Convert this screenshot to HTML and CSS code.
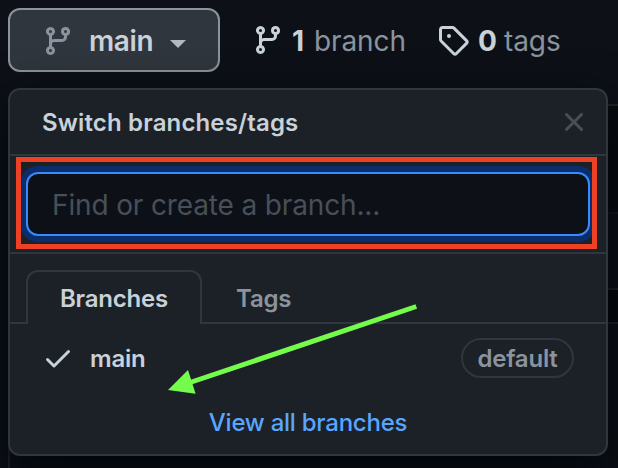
FILE: index.html
```html
<!DOCTYPE html>
<html lang="en">
<head>
<meta charset="utf-8">
<title>Switch branches/tags</title>
<link rel="stylesheet" href="styles.css">
</head>
<body>
<svg class="defs" width="0" height="0">
  <symbol id="git-branch" viewBox="0 0 16 16"><path fill-rule="evenodd" d="M11.75 2.5a.75.75 0 100 1.5.75.75 0 000-1.5zm-2.25.75a2.25 2.25 0 113 2.122V6A2.5 2.5 0 0110 8.5H6a1 1 0 00-1 1v1.128a2.251 2.251 0 11-1.5 0V5.372a2.25 2.25 0 111.5 0v1.836A2.492 2.492 0 016 7h4a1 1 0 001-1v-.628A2.25 2.25 0 019.5 3.25zM4.25 12a.75.75 0 100 1.5.75.75 0 000-1.5zM3.5 3.25a.75.75 0 111.5 0 .75.75 0 01-1.5 0z"/></symbol>
</svg>
<div class="page">
  <header class="toolbar">
    <button class="branch-button" type="button">
      <svg class="icon"><use href="#git-branch"/></svg>
      <span class="branch-name">main</span>
      <span class="caret"></span>
    </button>
    <a class="stat stat-branch"><svg class="icon"><use href="#git-branch"/></svg><strong>1</strong><span class="stat-label">branch</span></a>
    <a class="stat stat-tag"><svg class="icon" viewBox="0 0 16 16"><path fill-rule="evenodd" d="M2.5 7.775V2.75a.25.25 0 01.25-.25h5.025a.25.25 0 01.177.073l6.25 6.25a.25.25 0 010 .354l-5.025 5.025a.25.25 0 01-.354 0l-6.25-6.25a.25.25 0 01-.073-.177zm-1.5 0V2.75C1 1.784 1.784 1 2.75 1h5.025c.464 0 .91.184 1.238.513l6.25 6.25a1.75 1.75 0 010 2.474l-5.026 5.026a1.75 1.75 0 01-2.474 0l-6.25-6.25A1.75 1.75 0 011 7.775zM6 5a1 1 0 100 2 1 1 0 000-2z"/></svg><strong>0</strong><span class="stat-label">tags</span></a>
  </header>
  <div class="files">
    <div class="commit-row"></div>
    <div class="file-row"></div>
    <div class="file-row short"></div>
  </div>
  <section class="menu">
    <div class="menu-header">
      <span class="menu-title">Switch branches/tags</span>
      <svg class="icon close" viewBox="0 0 16 16"><path d="M3.72 3.72a.75.75 0 011.06 0L8 6.94l3.22-3.22a.75.75 0 111.06 1.06L9.06 8l3.22 3.22a.75.75 0 11-1.06 1.06L8 9.06l-3.22 3.22a.75.75 0 01-1.06-1.06L6.94 8 3.72 4.78a.75.75 0 010-1.06z"/></svg>
    </div>
    <div class="filter">
      <div class="filter-input"><span>Find or create a branch...</span></div>
      <div class="highlight"></div>
    </div>
    <nav class="tabs">
      <span class="tab active"><span class="tab-branches">Branches</span></span>
      <span class="tab"><span class="tab-tags">Tags</span></span>
    </nav>
    <div class="item">
      <svg class="icon" viewBox="0 0 16 16"><path d="M13.78 4.22a.75.75 0 010 1.06l-7.25 7.25a.75.75 0 01-1.06 0L2.22 9.28a.75.75 0 011.06-1.06L6 10.94l6.72-6.72a.75.75 0 011.06 0z"/></svg>
      <span class="item-name">main</span>
      <span class="badge"><span>default</span></span>
    </div>
    <div class="menu-footer"><a>View all branches</a></div>
  </section>
  <svg class="arrow" viewBox="0 0 618 468"><path d="M190 382.500L416.300 306.500" stroke="#75fb4c" stroke-width="5"/><path d="M168 390L188 370L195.600 393.700Z" fill="#75fb4c"/></svg>
</div>
</body>
</html>
```

FILE: styles.css
```css
* { box-sizing: border-box; }
body {
  margin: 0;
  background: #0d1117;
  color: #c9d1d9;
  font-family: Inter, "Liberation Sans", sans-serif;
  font-size: 24px;
}
.defs { position: absolute; }
.page {
  position: relative;
  width: 618px;
  height: 468px;
  overflow: hidden;
}
.icon { width: 32px; height: 32px; fill: currentColor; flex: none; }

.toolbar {
  display: flex;
  align-items: flex-start;
  height: 104px;
  padding: 8px 0 0 8px;
}
.branch-button {
  display: flex;
  align-items: center;
  width: 212px;
  height: 64px;
  padding: 0 0 0 32px;
  border: 2px solid #8b949e;
  border-radius: 12px;
  background: #30363d;
  color: #c9d1d9;
  font: 600 28px/32px Inter, "Liberation Sans", sans-serif;
}
.branch-button .icon { color: #8b949e; margin-top: 2px; }
.branch-name { width: 64px; margin-left: 15px; padding-top: 2px; letter-spacing: -0.4px; white-space: nowrap; }
.caret {
  margin: 8px 0 0 17px;
  border: 8px solid transparent;
  border-top-color: #b1b8bf;
  border-bottom: 0;
}
.stat {
  display: flex;
  align-items: center;
  height: 64px;
  font-size: 28px;
  line-height: 32px;
  white-space: nowrap;
}
.stat strong { font-weight: 700; padding-top: 1px; }
.stat-branch { margin-left: 32px; width: 185px; }
.stat-branch strong { width: 22px; margin-left: 8px; }
.stat-tag strong { width: 26px; margin-left: 9px; }
.stat-label { color: #8b949e; padding-top: 1px; letter-spacing: -0.1px; }

.files {
  height: 364px;
  margin-left: 8px;
  border: solid #21262d;
  border-width: 2px 0 0 2px;
}
.commit-row { height: 108px; border-bottom: 2px solid #161b22; background: #090c10; }
.file-row { height: 76px; border-bottom: 2px solid #21262d; }
.file-row.short { height: 34px; background: #05080c; }

.menu {
  position: absolute;
  top: 88px;
  left: 8px;
  width: 600px;
  height: 368px;
  border: 2px solid #30363d;
  border-radius: 12px;
  background: #1c2128;
  box-shadow: 0 16px 48px #010409;
}
.menu-header {
  display: flex;
  align-items: center;
  justify-content: space-between;
  height: 66px;
  padding: 0 16px 0 32px;
  border-bottom: 2px solid #30363d;
}
.menu-title { font-weight: 600; letter-spacing: 0.15px; white-space: nowrap; }
.close { color: #484f58; }
.filter {
  position: relative;
  height: 98px;
  padding: 16px;
  border-bottom: 2px solid #30363d;
}
.filter-input {
  display: flex;
  align-items: center;
  width: 564px;
  height: 64px;
  padding: 2px 0 0 24px;
  border: 2px solid #388bfd;
  border-radius: 12px;
  background: #0d1117;
  box-shadow: 0 0 0 6px #0c2d6b;
  color: #484f58;
  font-size: 28px;
  letter-spacing: -0.14px;
  white-space: nowrap;
}
.highlight {
  position: absolute;
  top: 1px;
  left: 6px;
  width: 581px;
  height: 92px;
  border: 5px solid #ee4025;
}
.tabs {
  display: flex;
  height: 70px;
  padding: 16px 0 0 16px;
  box-shadow: inset 0 -2px #30363d;
  font-weight: 600;
  letter-spacing: -0.2px;
}
.tab {
  display: flex;
  align-items: center;
  height: 54px;
  padding: 2px 32px 0 34px;
  color: #8b949e;
}
.tab.active {
  width: 176px;
  padding: 0 0 0 32px;
  border: 2px solid #30363d;
  border-bottom: 0;
  border-radius: 12px 12px 0 0;
  background: #1c2128;
  color: #c9d1d9;
}
.item {
  display: flex;
  align-items: center;
  height: 68px;
  padding: 0 32px;
  font-weight: 600;
  letter-spacing: -0.2px;
}
.item-name { margin-left: 16px; }
.badge {
  display: flex;
  align-items: center;
  justify-content: center;
  width: 113px;
  height: 40px;
  margin-left: auto;
  border: 2px solid #30363d;
  border-radius: 20px;
  color: #8b949e;
}
.menu-footer {
  display: flex;
  align-items: center;
  justify-content: center;
  height: 60px;
  color: #58a6ff;
  font-weight: 500;
  letter-spacing: -0.25px;
}
.arrow { position: absolute; inset: 0; width: 618px; height: 468px; }
```
